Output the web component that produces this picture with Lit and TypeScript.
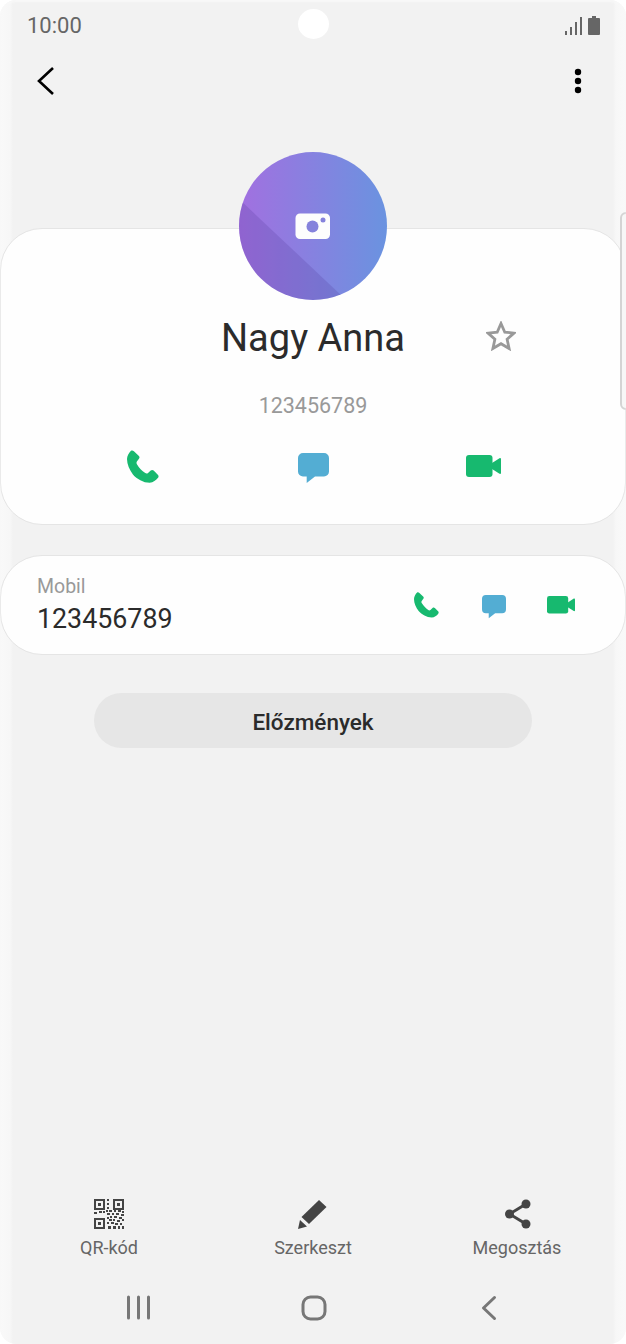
import { LitElement, html, css, svg } from "lit";
import { customElement } from "lit/decorators.js";

const GREEN = "#17b96f";
const BLUE = "#53add3";

const phone = (s: number) => html`<svg width=${s} height=${s * 33 / 32} viewBox="0 0 32.4 33" fill=${GREEN}><path d="M4 .6C5 0 6 .2 7 1l4.800 4.500c1.100 1.100 1.100 2.100.3 3.100L10 11.500c-.6 1-.4 2 .2 3C12.200 17.800 15 20.800 18.500 23.200c1 .6 2 .6 2.800-.2L24 20.600c1-.9 2-.8 3 0l4.200 4.200c1 1 1 2.200.2 3.200-1.900 2.500-4.900 4.900-8.400 4.900-6.500 0-13-3.900-17-8.400C2.500 20 0 14.500 0 9 0 6 2 2.500 4 .6Z"/></svg>`;
const chat = (s: number) => html`<svg class="chat" width=${s} height=${s} viewBox="0 0 31 31" fill=${BLUE}><path d="M5 0h21a5 5 0 0 1 5 5v13.500a5 5 0 0 1-5 5H17L8.700 30V23.500H5a5 5 0 0 1-5-5V5a5 5 0 0 1 5-5Z"/></svg>`;
const video = (s: number) => html`<svg width=${s} height=${s * 22 / 35} viewBox="0 0 35 22" fill=${GREEN}><rect width="26.500" height="22" rx="3"/><path d="M26 8l7.500-4.800c.8-.4 1.500 0 1.500.8v14c0 .8-.7 1.200-1.500.8L26 14Z"/></svg>`;

const qrCells = [
  [0,13,3,2],[5,12,3,2],[9,12,2,2],[12,11,2,2],[15,11,3,2],[20,11,2,2],[24,11,3,2],[28,12,2,2],
  [13,0,2,2],[13,4,2,2],[13,8,2,2],
  [13,14,3,2],[18,14,2,2],[22,14,3,2],[27,15,3,2],
  [13,18,2,2],[16,17,2,2],[20,17,3,2],[25,18,3,2],
  [15,20,3,2],[19,20,2,2],[23,21,3,2],[28,20,2,2],
  [13,23,2,2],[17,23,3,2],[21,24,3,2],[26,24,2,2],
  [14,27,3,3],[19,27,3,3],[24,27,2,3],[28,27,2,3],
];

@customElement("app-root")
export class AppRoot extends LitElement {
  static styles = css`
    :host {
      display: flex;
      flex-direction: column;
      position: relative;
      width: 626px;
      height: 1344px;
      overflow: hidden;
      font-family: Roboto, "Noto Sans", sans-serif;
      background: linear-gradient(to right, #f9f9f9, #f7f7f7 10px, #f2f2f2 13px, #f2f2f2 calc(100% - 13px), #f7f7f7 calc(100% - 10px), #f9f9f9);
    }
    .frame {
      position: absolute;
      inset: 0;
      border-radius: 16px;
      box-shadow: 0 0 0 30px #fff, inset 0 2px 2px #f8f8f8;
      pointer-events: none;
      z-index: 3;
    }
    .side-key {
      position: absolute;
      left: 620px;
      top: 212px;
      width: 12px;
      height: 198px;
      box-sizing: border-box;
      border: 2px solid #d4d4d4;
      border-radius: 7px;
      background: #f7f7f7;
      z-index: 2;
    }
    .status {
      height: 50px;
      flex: none;
      display: flex;
      align-items: center;
      justify-content: space-between;
      padding: 0 24px 0 27px;
      color: #666;
      font-size: 22px;
      position: relative;
    }
    .hole {
      position: absolute;
      left: 298px;
      top: 9px;
      width: 31px;
      height: 30px;
      border-radius: 50%;
      background: #fff;
    }
    .status-icons { display: flex; align-items: center; }
    .status-icons svg { display: block; }
    .toolbar {
      height: 62px;
      flex: none;
      display: flex;
      align-items: center;
      justify-content: space-between;
      padding: 0 44px 0 36px;
    }
    .hero {
      flex: none;
      padding-top: 40px;
      display: flex;
      flex-direction: column;
      align-items: stretch;
    }
    .avatar {
      display: block;
      align-self: center;
      width: 148px;
      height: 148px;
      margin-bottom: -72px;
      position: relative;
      z-index: 1;
    }
    .card {
      background: #fefefe;
      border: 1px solid #e5e5e5;
      border-radius: 42px;
      box-sizing: border-box;
    }
    .main {
      height: 297px;
      padding-top: 84px;
    }
    .name-row {
      display: grid;
      grid-template-columns: 1fr auto 1fr;
      align-items: center;
      height: 50px;
    }
    .name {
      grid-column: 2;
      font-size: 38px;
      line-height: 50px;
      color: #2b2b2b;
      white-space: nowrap;
    }
    .star { margin-left: 81px; display: block; margin-top: -5px; }
    .number {
      margin-top: 28px;
      text-align: center;
      font-size: 21.500px;
      line-height: 30px;
      color: #999;
    }
    .actions {
      margin-top: 27px;
      display: grid;
      grid-template-columns: repeat(3, 170px);
      justify-content: center;
      justify-items: center;
      align-items: center;
      height: 36px;
    }
    .actions .chat { margin-top: 4px; }
    .mobile {
      margin-top: 30px;
      height: 100px;
      display: flex;
      align-items: center;
      justify-content: space-between;
      padding: 0 50px 0 36px;
    }
    .label { font-size: 19.500px; line-height: 24px; color: #999; margin-top: 2px; }
    .value { font-size: 26.800px; line-height: 36px; color: #2b2b2b; margin-top: 2px; }
    .mini {
      display: grid;
      grid-template-columns: 26px 24px 28px;
      column-gap: 42px;
      align-items: center;
      justify-items: center;
    }
    .mini .chat { margin: 4px 0 0 2px; }
    .history {
      margin: 38px 94px 0;
      height: 55px;
      border-radius: 28px;
      background: #e6e6e6;
      color: #2b2b2b;
      font-size: 22.500px;
      font-weight: 500;
      padding-top: 3px;
      box-sizing: border-box;
      display: flex;
      align-items: center;
      justify-content: center;
    }
    .tools {
      margin-top: auto;
      flex: none;
      height: 73px;
      padding: 0 7px;
      display: grid;
      grid-template-columns: repeat(3, 1fr);
      justify-items: center;
      box-sizing: border-box;
    }
    .tool {
      display: flex;
      flex-direction: column;
      align-items: center;
      color: #666;
      font-size: 18px;
      line-height: 24px;
    }
    .tool svg { display: block; margin-bottom: 7px; }
    .nav {
      flex: none;
      height: 72px;
      display: flex;
      align-items: center;
      padding: 0 7px;
    }
    .nav svg { display: block; }
  `;

  render() {
    return html`
      <div class="frame"></div>
      <div class="side-key"></div>
      <div class="status">
        <span>10:00</span>
        <span class="hole"></span>
        <span class="status-icons">
          <svg width="37" height="19" viewBox="0 0 37 19" fill="#666">
            <rect x="0" y="15" width="2" height="4"/>
            <rect x="5" y="11" width="2" height="8"/>
            <rect x="10" y="6" width="2" height="13"/>
            <rect x="15" y="1" width="2" height="18"/>
            <path d="M27 0h4v2h3a1 1 0 0 1 1 1v15a1 1 0 0 1-1 1H24a1 1 0 0 1-1-1V3a1 1 0 0 1 1-1h3Z"/>
          </svg>
        </span>
      </div>
      <div class="toolbar">
        <svg width="20" height="30" viewBox="0 0 20 30" fill="none" stroke="#000" stroke-width="2.600">
          <path d="M17 2 3 15l14 13"/>
        </svg>
        <svg width="8" height="26" viewBox="0 0 8 26" fill="#000">
          <circle cx="4" cy="4" r="3.200"/><circle cx="4" cy="13" r="3.200"/><circle cx="4" cy="22" r="3.200"/>
        </svg>
      </div>
      <div class="hero">
        <svg class="avatar" viewBox="0 0 148 148">
          <defs>
            <linearGradient id="g" x1="0" x2="1" y1="0" y2="0">
              <stop offset="0" stop-color="#a270e0"/>
              <stop offset="1" stop-color="#6a93e0"/>
            </linearGradient>
            <clipPath id="c"><circle cx="74" cy="74" r="74"/></clipPath>
          </defs>
          <circle cx="74" cy="74" r="74" fill="url(#g)"/>
          <path clip-path="url(#c)" d="M0 47 104 145V160H0Z" fill="#4a3090" fill-opacity=".2"/>
          <rect x="56.500" y="61.500" width="34.500" height="25.500" rx="4.500" fill="#fdfdfd"/>
          <circle cx="73.500" cy="74.500" r="6" fill="#8582dc"/>
          <circle cx="84" cy="68" r="2.500" fill="#8582dc"/>
        </svg>
        <div class="card main">
          <div class="name-row">
            <div class="name">Nagy Anna</div>
            <svg class="star" width="30" height="30" viewBox="0 0 30 30" fill="none" stroke="#999" stroke-width="2.800" stroke-linejoin="miter">
              <path d="M15 2.500 18.800 11.200 28 12.100 21.100 18.300 23.100 27.500 15 22.700 6.900 27.500 8.900 18.300 2 12.100 11.200 11.200Z"/>
            </svg>
          </div>
          <div class="number">123456789</div>
          <div class="actions">${phone(32)}${chat(31)}${video(35)}</div>
        </div>
      </div>
      <div class="card mobile">
        <div>
          <div class="label">Mobil</div>
          <div class="value">123456789</div>
        </div>
        <div class="mini">${phone(25)}${chat(24)}${video(28)}</div>
      </div>
      <div class="history">Előzmények</div>
      <div class="tools">
        <div class="tool">
          <svg width="30" height="30" viewBox="0 0 30 30" fill="#444">
            <path fill-rule="evenodd" d="M0 0h11v11H0Zm2 2v7h7V2Z"/><rect x="4" y="4" width="3" height="3"/>
            <path fill-rule="evenodd" d="M19 0h11v11H19Zm2 2v7h7V2Z"/><rect x="23" y="4" width="3" height="3"/>
            <path fill-rule="evenodd" d="M0 19h11v11H0Zm2 2v7h7V21Z"/><rect x="4" y="23" width="3" height="3"/>
            ${qrCells.map(([x, y, w, h]) => svg`<rect x=${x} y=${y} width=${w} height=${h}/>`)}
          </svg>
          <span>QR-kód</span>
        </div>
        <div class="tool">
          <svg width="30" height="30" viewBox="0 0 30 30" fill="#444">
            <path d="M21 1 28.500 8 11 25 3.500 18Z"/>
            <path d="M2 21 9 27.500 0 30Z"/>
          </svg>
          <span>Szerkeszt</span>
        </div>
        <div class="tool">
          <svg width="30" height="30" viewBox="0 0 30 30" fill="#444" stroke="#444">
            <path d="M24 5 7.500 15 24 25" fill="none" stroke-width="3"/>
            <circle cx="24" cy="5" r="4.500" stroke="none"/>
            <circle cx="7.500" cy="15" r="4.500" stroke="none"/>
            <circle cx="24" cy="25" r="4.500" stroke="none"/>
          </svg>
          <span>Megosztás</span>
        </div>
      </div>
      <div class="nav">
        <svg width="612" height="30" viewBox="0 0 612 30" fill="none" stroke="#777" stroke-width="3" stroke-linecap="round" stroke-linejoin="round">
          <path d="M121.500 4V25M131.500 4V25M141.500 4V25"/>
          <rect x="296" y="4" width="22" height="22" rx="7.500"/>
          <path d="M487.500 4.500 476.500 15l11 10.500"/>
        </svg>
      </div>
    `;
  }
}
